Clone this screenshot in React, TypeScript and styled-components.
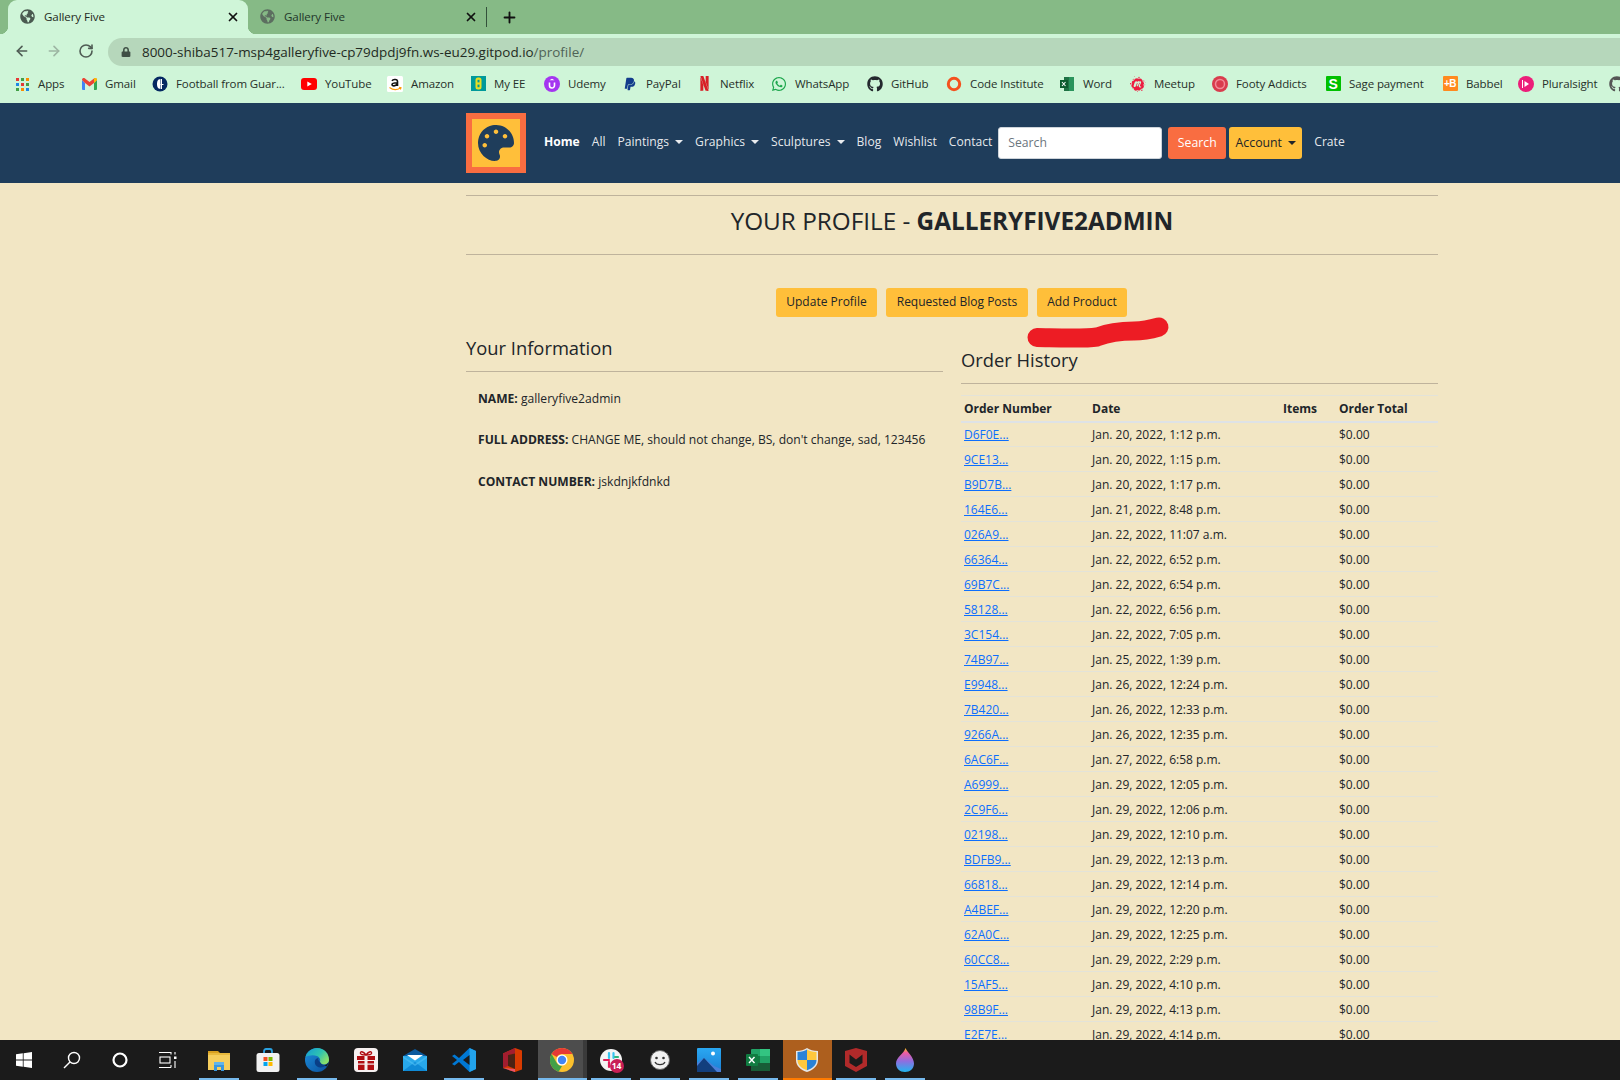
import React from "react";
import styled, { createGlobalStyle } from "styled-components";
import { ArrowLeft, ArrowRight, RotateCw, Plus, X } from "lucide-react";
import { FaPalette, FaGlobeAmericas, FaPaypal, FaWhatsapp, FaGithub, FaLock } from "react-icons/fa";
import { SiNetflix, SiMeetup } from "react-icons/si";

const Global = createGlobalStyle`
  html, body { margin: 0; padding: 0; height: 100%; overflow: hidden; background: #f2e6c4; }
  body { font-family: "Open Sans", "Noto Sans", sans-serif; color: #212529; }
  * { box-sizing: border-box; }
`;

const Page = styled.div`
  position: relative;
  width: 1620px;
  height: 1080px;
  display: flex;
  flex-direction: column;
  overflow: hidden;
`;

/* ---------- browser chrome ---------- */
const TabStrip = styled.div`
  height: 34px;
  flex: none;
  background: #86ba86;
  display: flex;
  align-items: stretch;
  padding-left: 8px;
`;
const Tab = styled.div<{ $active?: boolean }>`
  position: relative;
  width: 240px;
  display: flex;
  align-items: center;
  padding: 0 ${(p) => (p.$active ? 8 : 10)}px 0 12px;
  gap: 9px;
  border-radius: 9px 9px 0 0;
  background: ${(p) => (p.$active ? "#cff5d8" : "transparent")};
  color: ${(p) => (p.$active ? "#1f2a22" : "#22352a")};
  ${(p) =>
    p.$active
      ? `&::before { content: ""; position: absolute; left: -8px; bottom: 0; width: 8px; height: 8px;
           background: radial-gradient(circle at 0 0, transparent 8px, #cff5d8 8.5px); }
         &::after { content: ""; position: absolute; right: -8px; bottom: 0; width: 8px; height: 8px;
           background: radial-gradient(circle at 100% 0, transparent 8px, #cff5d8 8.5px); }`
      : ""}
`;
const TabGlobe = styled(FaGlobeAmericas)<{ $active?: boolean }>`
  width: 15px;
  height: 15px;
  flex: none;
  margin-bottom: 1px;
  color: ${(p) => (p.$active ? "#4a5a50" : "#5c6e60")};
`;
const TabTitle = styled.span`
  flex: 1;
  margin-bottom: 2px;
  font-size: 11.6px;
  letter-spacing: -0.1px;
  white-space: nowrap;
`;
const NewTabGroup = styled.div`
  display: flex;
  align-items: center;
  height: 100%;
`;
const TabDivider = styled.div`
  width: 1px;
  height: 20px;
  background: #33513a;
  margin-left: -2px;
  margin-right: 14px;
`;

const Toolbar = styled.div`
  height: 34px;
  flex: none;
  background: #cff5d8;
  display: flex;
  align-items: center;
  padding-left: 14px;
`;
const NavIcons = styled.div`
  display: flex;
  width: 94px;
  gap: 16px;
  flex: none;
  color: #4f5c54;
`;
const UrlBar = styled.div`
  flex: 1;
  height: 28px;
  margin-top: 1px;
  background: #b6d7bb;
  border-radius: 14px 0 0 14px;
  display: flex;
  align-items: center;
  padding-left: 13px;
  gap: 11px;
  font-size: 13.45px;
  color: #1f2a22;
  white-space: nowrap;
`;
const UrlPath = styled.span`
  color: #4f6356;
`;

const Bookmarks = styled.div`
  height: 35px;
  flex: none;
  background: #cff5d8;
  display: flex;
  align-items: center;
  padding: 0 0 4px 14px;
  overflow: hidden;
`;
const Bookmark = styled.div<{ $w: number }>`
  flex: 0 0 ${(p) => p.$w}px;
  display: flex;
  align-items: center;
  gap: 8px;
  font-size: 11.5px;
  letter-spacing: -0.1px;
  color: #263029;
  white-space: nowrap;
`;
const Fav = styled.span`
  width: 16px;
  height: 16px;
  flex: none;
  display: flex;
  align-items: center;
  justify-content: center;
`;
const FavText = styled.span<{ $bg: string; $c: string; $s?: number }>`
  width: 15px;
  height: 15px;
  display: flex;
  align-items: center;
  justify-content: center;
  border-radius: 1px;
  background: ${(p) => p.$bg};
  color: ${(p) => p.$c};
  font-size: ${(p) => p.$s ?? 12}px;
  font-weight: 700;
  letter-spacing: -0.5px;
  font-family: "Liberation Sans", sans-serif;
`;

/* ---------- site nav ---------- */
const SiteNav = styled.nav`
  height: 80px;
  flex: none;
  background: #1f3d5b;
  display: flex;
  align-items: center;
  padding-left: 466px;
`;
const Logo = styled.div`
  width: 60px;
  height: 60px;
  flex: none;
  background: #ffbf3a;
  border: 6px solid #f96d41;
  display: flex;
  align-items: center;
  justify-content: center;
  color: #1f3d5b;
  font-size: 36px;
  margin-right: 12px;
`;
const NavLinks = styled.div`
  display: flex;
  align-items: center;
  height: 32px;
  margin-top: -3px;
`;
const NavLink = styled.a<{ $bold?: boolean }>`
  padding: 0 6px;
  font-size: 12.1px;
  font-weight: ${(p) => (p.$bold ? 700 : 400)};
  color: ${(p) => (p.$bold ? "#fff" : "rgba(255,255,255,.9)")};
  display: flex;
  align-items: center;
  white-space: nowrap;
`;
const Caret = styled.span<{ $c?: string }>`
  display: inline-block;
  margin-left: 6px;
  border-top: 4px solid ${(p) => p.$c ?? "rgba(255,255,255,.9)"};
  border-left: 4px solid transparent;
  border-right: 4px solid transparent;
`;
const SearchInput = styled.input`
  width: 164px;
  height: 32px;
  margin-left: 0;
  padding: 0 9px;
  border: 1px solid #ced4da;
  border-radius: 3px;
  font: 12.2px "Open Sans", sans-serif;
  color: #495057;
  background: #fff;
  &::placeholder { color: #6c757d; opacity: 1; }
`;
const NavButton = styled.button<{ $bg: string; $c: string; $w: number; $ml: number }>`
  width: ${(p) => p.$w}px;
  height: 32px;
  margin-left: ${(p) => p.$ml}px;
  border: 0;
  border-radius: 3px;
  padding: 0;
  background: ${(p) => p.$bg};
  color: ${(p) => p.$c};
  font: 12.3px "Open Sans", sans-serif;
  display: flex;
  align-items: center;
  justify-content: center;
`;
const NavRight = styled.div`
  display: flex;
  align-items: center;
  margin-top: -1px;
`;
const CrateLink = styled(NavLink)`
  margin-left: 6px;
  margin-top: -3px;
`;

/* ---------- content ---------- */
const Main = styled.main`
  flex: 1;
  min-height: 0;
  overflow: hidden;
  background: #f2e6c4;
  padding-left: 466px;
`;
const Container = styled.div`
  position: relative;
  width: 972px;
`;
const Rule = styled.hr`
  margin: 0;
  border: 0;
  border-top: 1px solid #bfb39c;
`;
const TitleBlock = styled.div`
  padding-top: 12px;
`;
const Title = styled.h2`
  margin: 0;
  height: 58px;
  display: flex;
  align-items: center;
  justify-content: center;
  font-size: 24.3px;
  font-weight: 400;
  color: #212529;
  white-space: pre;
  padding-bottom: 9px;
  strong { font-weight: 700; }
`;
const ButtonRow = styled.div`
  display: flex;
  margin-top: 33px;
  padding-left: 310px;
  gap: 9px;
`;
const Amber = styled.button<{ $w: number }>`
  width: ${(p) => p.$w}px;
  height: 29px;
  padding: 0 0 2px;
  border: 0;
  border-radius: 3px;
  background: #ffbf3a;
  color: #212529;
  font: 12px "Open Sans", sans-serif;
`;
const Scribble = styled.svg`
  position: absolute;
  left: 556px;
  top: 130px;
  width: 150px;
  height: 40px;
`;
const Columns = styled.div`
  display: grid;
  grid-template-columns: 477px 477px;
  column-gap: 18px;
  margin-top: 17px;
`;
const Column = styled.section<{ $top?: number }>`
  padding-top: ${(p) => p.$top ?? 0}px;
  min-width: 0;
`;
const Heading = styled.h4`
  margin: 0;
  height: 38px;
  font-size: 18.35px;
  line-height: 28px;
  font-weight: 400;
  color: #212529;
  border-bottom: 1px solid #bfb39c;
`;
const Info = styled.div`
  padding: 5.500px 12px 0;
`;
const InfoLine = styled.p`
  margin: 0;
  height: 41.600px;
  display: flex;
  align-items: center;
  font-size: 12.1px;
  white-space: pre;
  strong { font-weight: 700; }
`;
const Table = styled.table`
  width: 477px;
  margin-top: 11px;
  border-collapse: collapse;
  table-layout: fixed;
  font-size: 12px;
  color: #212529;
  th, td { padding: 0 0 0 3px; text-align: left; white-space: nowrap; }
  th { height: 26px; font-weight: 700; border-top: 1px solid #e3e3d9; border-bottom: 2px solid #dee2e6; }
  td { height: 25px; border-bottom: 1px solid #e3e3d9; }
  a { color: #0d6efd; text-decoration: underline; }
`;

/* ---------- taskbar ---------- */
const Taskbar = styled.footer`
  height: 40px;
  flex: none;
  background: #1b1b1b;
  display: flex;
  align-items: stretch;
  position: relative;
`;
const SysSlot = styled.div`
  width: 48px;
  flex: none;
  display: flex;
  align-items: center;
  justify-content: center;
  color: #fff;
`;
const AppSlot = styled.div<{ $on?: boolean; $tone?: "active" | "alert" }>`
  position: relative;
  width: 49px;
  flex: none;
  display: flex;
  align-items: center;
  justify-content: center;
  background: ${(p) =>
    p.$tone === "active"
      ? "linear-gradient(90deg,#4d4d4d 0 45px,#3a3a3a 45px)"
      : p.$tone === "alert"
      ? "#ad5f1e"
      : "transparent"};
  ${(p) =>
    p.$on
      ? `&::after { content: ""; position: absolute; bottom: 0; height: 2px;
           left: ${p.$tone ? 0 : 4}px; right: ${p.$tone ? 0 : 5}px;
           background: ${p.$tone === "alert" ? "#ff7b00" : "#76b9ed"}; }`
      : ""}
`;
const AppsStart = styled.div`
  width: 2.500px;
  flex: none;
`;
const SlackBadge = styled.span`
  position: absolute;
  left: 23px;
  top: 19px;
  width: 14px;
  height: 14px;
  border-radius: 50%;
  background: #c81e56;
  color: #fff;
  font-size: 8.500px;
  font-weight: 700;
  line-height: 14px;
  text-align: center;
`;

/* ---------- drawn icons ---------- */
const AppsGrid = () => (
  <svg width="14" height="14" viewBox="0 0 14 14">
    {[0, 1, 2].flatMap((r) =>
      [0, 1, 2].map((c) => (
        <rect key={`${r}${c}`} x={c * 5 + 1} y={r * 5 + 1} width="3" height="3"
          fill={[["#e53935", "#43a047", "#fb8c00"], ["#1e88e5", "#e53935", "#43a047"], ["#43a047", "#fb8c00", "#1e88e5"]][r][c]} />
      ))
    )}
  </svg>
);
const Gmail = () => (
  <svg width="15" height="12" viewBox="0 0 15 12">
    <path d="M0 2v9a1 1 0 0 0 1 1h2V5z" fill="#4285f4" />
    <path d="M15 2v9a1 1 0 0 1-1 1h-2V5z" fill="#34a853" />
    <path d="M0 2l3 3 4.500 3.400L12 5l3-3c0-2-2-2.400-3-1.500L7.500 4 3 .5C2-.4 0 0 0 2z" fill="#ea4335" />
    <path d="M12 .5V5l3-3c0-2-2-2.400-3-1.500z" fill="#fbbc04" />
  </svg>
);
const Guardian = () => (
  <svg width="16" height="16" viewBox="0 0 16 16">
    <circle cx="8" cy="8" r="7.500" fill="#052962" />
    <path d="M8.500 3C5.500 3 5 6 5 8s.5 5 3.500 5z" fill="#fff" />
    <rect x="8.500" y="8" width="3" height="1" fill="#fff" />
    <rect x="9" y="3" width="1" height="10" fill="#fff" />
  </svg>
);
const YouTube = () => (
  <svg width="16" height="12" viewBox="0 0 16 12">
    <rect width="16" height="12" rx="3" fill="#f00" />
    <path d="M6.300 3.400v5.200L10.800 6z" fill="#fff" />
  </svg>
);
const Amazon = () => (
  <svg width="16" height="16" viewBox="0 0 16 16">
    <rect width="16" height="16" rx="1.500" fill="#fff" />
    <path d="M5 4.800C6 3 10.500 3 10.500 5.500V10M10.300 6.800C7 6.800 5 7.500 5 8.800s3.500 1.800 5.300-.8" fill="none" stroke="#111" strokeWidth="1.600" />
    <path d="M2.500 11.500c3.500 2.600 7.500 2.600 11 .5M12 11.300l2 .4-.6 1.800" fill="none" stroke="#f90" strokeWidth="1.100" />
  </svg>
);
const MyEE = () => (
  <svg width="15" height="15" viewBox="0 0 15 15">
    <rect width="15" height="15" fill="#009a9a" />
    <rect x="4.500" y="1.500" width="6" height="12" rx="2.500" fill="#e8de22" />
    <rect x="6.500" y="3.800" width="2" height="2.600" fill="#009a9a" />
    <rect x="6.500" y="8.600" width="2" height="2.600" fill="#009a9a" />
  </svg>
);
const Udemy = () => (
  <svg width="16" height="16" viewBox="0 0 16 16">
    <circle cx="8" cy="8" r="8" fill="#a435f0" />
    <path d="M5.500 6.500v3a2.500 2.500 0 0 0 5 0v-3" fill="none" stroke="#fff" strokeWidth="1.600" />
    <path d="M8 2.800l2.500 1.400H5.500z" fill="#fff" />
  </svg>
);
const Ring = () => (
  <svg width="16" height="16" viewBox="0 0 16 16">
    <circle cx="8" cy="8" r="5.700" fill="none" stroke="#f4511e" strokeWidth="3" />
  </svg>
);
const WordLike = () => (
  <svg width="16" height="16" viewBox="0 0 16 16">
    <path d="M5 1h10v14H5z" fill="#1f7244" />
    <rect x="10" y="1" width="5" height="14" fill="#2fa267" opacity=".7" />
    <rect x="1" y="4" width="8" height="8" fill="#0e5c2f" />
    <path d="M3 6l3.500 4M6.500 6L3 10" stroke="#fff" strokeWidth="1.100" />
  </svg>
);
const Footy = () => (
  <svg width="16" height="16" viewBox="0 0 16 16">
    <circle cx="8" cy="8" r="8" fill="#d93c4d" />
    <circle cx="8" cy="8" r="4.500" fill="none" stroke="#f28a96" strokeWidth="1.500" />
  </svg>
);
const Plural = () => (
  <svg width="16" height="16" viewBox="0 0 16 16">
    <circle cx="8" cy="8" r="8" fill="#ec1e79" />
    <path d="M6.500 5v6l4.500-3z" fill="#fff" />
    <path d="M4.500 4v8" stroke="#fff" strokeWidth="1" />
  </svg>
);

const WinLogo = () => (
  <svg width="16" height="16" viewBox="0 0 16 16" fill="#fff">
    <path d="M0 2.300L6.800 1.300V7.600H0zM7.600 1.200L16 0V7.600H7.600zM0 8.400H6.800V14.700L0 13.700zM7.600 8.400H16V16L7.600 14.800z" />
  </svg>
);
const SearchGlass = () => (
  <svg width="18" height="18" viewBox="0 0 18 18" fill="none" stroke="#fff" strokeWidth="1.400">
    <circle cx="11" cy="7" r="5.500" />
    <path d="M7 11l-6 6" />
  </svg>
);
const Cortana = () => (
  <svg width="18" height="18" viewBox="0 0 18 18" fill="none" stroke="#fff" strokeWidth="2.200">
    <circle cx="9" cy="9" r="6.500" />
  </svg>
);
const TaskView = () => (
  <svg width="18" height="16" viewBox="0 0 18 16" fill="none" stroke="#fff" strokeWidth="1.100">
    <path d="M0 .5h12M12 0v2.500M0 15.500h12M12 13v2.500" />
    <rect x="1" y="5" width="10" height="6" />
    <rect x="15" y="4.500" width="2.500" height="2.500" fill="#fff" stroke="none" />
    <path d="M16 9v7M16 0v2.500" />
  </svg>
);
const Explorer = () => (
  <svg width="24" height="24" viewBox="0 0 24 24">
    <path d="M1 3h10l2 2H1z" fill="#d9a020" />
    <rect x="1" y="5" width="22" height="17" fill="#f6ce5d" />
    <rect x="1" y="5" width="22" height="2" fill="#e9b93c" />
    <path d="M7 23v-7h10v7h-3v-4h-4v4z" fill="#3a96dd" />
    <rect x="7" y="14" width="10" height="3" fill="#62b4ea" />
  </svg>
);
const Store = () => (
  <svg width="24" height="24" viewBox="0 0 24 24">
    <path d="M8 7V3.500C8 2 9 1 10 1h4c1 0 2 1 2 2.500V7" fill="none" stroke="#2aa1e0" strokeWidth="1.800" />
    <rect x="0.500" y="5" width="23" height="19" rx="2.500" fill="#f1f1f1" />
    <rect x="7.500" y="9" width="4" height="4" fill="#f25022" />
    <rect x="12.500" y="9" width="4" height="4" fill="#7fba00" />
    <rect x="7.500" y="14" width="4" height="4" fill="#00a4ef" />
    <rect x="12.500" y="14" width="4" height="4" fill="#ffb900" />
  </svg>
);
const Edge = () => (
  <svg width="24" height="24" viewBox="0 0 24 24">
    <defs>
      <linearGradient id="edgeTop" x1="0" y1="0" x2="1" y2="0.600">
        <stop offset="0" stopColor="#149ad6" />
        <stop offset=".6" stopColor="#2fc3b0" />
        <stop offset="1" stopColor="#8ae06a" />
      </linearGradient>
      <linearGradient id="edgeLow" x1="0" y1="0" x2="1" y2="1">
        <stop offset="0" stopColor="#1c8fdc" />
        <stop offset="1" stopColor="#0b4f9c" />
      </linearGradient>
    </defs>
    <circle cx="12" cy="12" r="12" fill="url(#edgeLow)" />
    <path d="M.5 9C2 3.500 7 0 12 0c7 0 12 5 12 12 0 3-3 5-6 4.500-2.500-.4-3.500-1.500-3-2.800.8-2-.4-4.700-3-5.700C8 6.500 3 7.500.5 9z" fill="url(#edgeTop)" />
    <path d="M15.500 14.500c1 2 3.500 2.800 6 2-1.500 2.200-4 3.200-6.500 3-3.500-.3-6-3.500-5-7 .5-1.500 2-2.500 3.500-2.500-1 1.500.5 3 2 4.500z" fill="#0a3f86" />
    <path d="M19.500 17.500a6 6 0 0 0 4-3.500c-.2 1.500-1 3.300-2 4.500z" fill="#1b1b1b" />
  </svg>
);
const Gift = () => (
  <svg width="24" height="24" viewBox="0 0 24 24">
    <rect width="24" height="24" rx="4" fill="#f6f0f0" />
    <path d="M12 7C9 3 6 3 6.500 5.500 7 7 10 7 12 7c2 0 5 0 5.500-1.500C18 3 15 3 12 7z" fill="none" stroke="#b00d12" strokeWidth="1.400" />
    <rect x="3" y="8" width="18" height="4" fill="#b00d12" />
    <rect x="4" y="13" width="16" height="9" fill="#b00d12" />
    <rect x="10.500" y="8" width="3" height="14" fill="#f6f0f0" />
    <rect x="4" y="15.500" width="16" height="1.200" fill="#f6f0f0" />
  </svg>
);
const Mail = () => (
  <svg width="24" height="24" viewBox="0 0 24 24">
    <path d="M0 8L12 1l12 7v3H0z" fill="#0b5a9e" />
    <path d="M0 8h24v15H0z" fill="#28a8ea" />
    <path d="M4 7h16l-8 5.500z" fill="#fff" />
    <path d="M0 23L12 14l12 9z" fill="#0f8ad6" />
    <path d="M0 8l12 8L24 8v2L12 18 0 10z" fill="#50c0f5" opacity=".6" />
  </svg>
);
const VSCode = () => (
  <svg width="24" height="24" viewBox="0 0 24 24">
    <path d="M17.500 0L24 3v18l-6.500 3L7 14l-4.500 3.500L0 16l5-4-5-4 2.500-1.500L7 10z" fill="#0078d4" />
    <path d="M17.500 0L24 3v18l-6.500 3z" fill="#22a3ec" />
    <path d="M17.500 7v10L11 12z" fill="#1b1b1b" />
  </svg>
);
const Office = () => (
  <svg width="20" height="24" viewBox="0 0 20 24">
    <path d="M12 0l7 2.500v19L12 24 0 20V5.500z" fill="#d83b01" />
    <path d="M12 0L0 5.500V20l5-2V7l7-1.500z" fill="#a31d2f" />
    <path d="M12 24L0 20l12 1z" fill="#e8546a" />
    <path d="M5 7l7-1.500V21l-7-3z" fill="#1b1b1b" opacity=".75" />
  </svg>
);
const Chrome = () => (
  <svg width="24" height="24" viewBox="0 0 24 24">
    <circle cx="12" cy="12" r="12" fill="#fbc02d" />
    <path d="M12 0a12 12 0 0 1 10.400 6H12a6 6 0 0 0-5.200 3L1.600 6A12 12 0 0 1 12 0z" fill="#e53935" />
    <path d="M1.600 6l5.200 9a6 6 0 0 0 5.200 3l-3.400 5.700A12 12 0 0 1 1.600 6z" fill="#43a047" />
    <circle cx="12" cy="12" r="5.500" fill="#fff" />
    <circle cx="12" cy="12" r="4.200" fill="#4285f4" />
  </svg>
);
const Slack = () => (
  <svg width="22" height="22" viewBox="0 0 22 22">
    <circle cx="11" cy="11" r="11" fill="#f4f4f4" />
    <path d="M9 4v5M13.500 4v5" stroke="#36c5f0" strokeWidth="2.200" strokeLinecap="round" />
    <path d="M15 8h3" stroke="#2eb67d" strokeWidth="2.200" strokeLinecap="round" />
    <path d="M4 11h5" stroke="#e01e5a" strokeWidth="2.200" strokeLinecap="round" />
    <path d="M9 13v5" stroke="#e01e5a" strokeWidth="2.200" strokeLinecap="round" />
  </svg>
);
const Smile = () => (
  <svg width="22" height="22" viewBox="0 0 22 22">
    <circle cx="11" cy="11" r="9.500" fill="#f1f1f1" stroke="#666" strokeWidth="1" />
    <circle cx="7.500" cy="9" r="1.300" fill="#333" />
    <circle cx="14.500" cy="9" r="1.300" fill="#333" />
    <path d="M6 13c1.500 3.500 8.500 3.500 10 0" fill="none" stroke="#333" strokeWidth="1.200" />
  </svg>
);
const Photos = () => (
  <svg width="24" height="24" viewBox="0 0 24 24">
    <defs>
      <linearGradient id="sky" x1="0" y1="0" x2="0" y2="1">
        <stop offset="0" stopColor="#2aa8f2" />
        <stop offset="1" stopColor="#1b7fd4" />
      </linearGradient>
    </defs>
    <rect width="24" height="24" rx="1" fill="url(#sky)" />
    <circle cx="16" cy="5.500" r="2" fill="#fff" />
    <path d="M0 15l7-5 10 8 7 3v3H0z" fill="#4a7fd8" />
    <path d="M0 18l7-8 13 14H0z" fill="#123f7e" />
  </svg>
);
const Excel = () => (
  <svg width="24" height="24" viewBox="0 0 24 24">
    <rect x="5" y="1" width="19" height="22" rx="1" fill="#21a366" />
    <rect x="14" y="1" width="10" height="7" fill="#33c481" />
    <rect x="5" y="8" width="9" height="7" fill="#107c41" />
    <rect x="5" y="15" width="19" height="8" fill="#185c37" />
    <rect y="6" width="12" height="12" rx="1" fill="#107c41" />
    <path d="M3 9l5.500 6M8.500 9L3 15" stroke="#fff" strokeWidth="1.400" />
  </svg>
);
const Shield = () => (
  <svg width="22" height="24" viewBox="0 0 22 24">
    <path d="M11 0c3 2 6 3 11 3v9c0 6-5 10-11 12C5 22 0 18 0 12V3c5 0 8-1 11-3z" fill="#e7e7e7" />
    <path d="M11 1.500V12H1.500V4C6 4 8.500 3 11 1.500z" fill="#2a82d6" />
    <path d="M11 1.500C13.500 3 16 4 20.500 4v8H11z" fill="#ffc83d" />
    <path d="M1.500 12H11v10.300C6 20.500 1.500 17.500 1.500 12z" fill="#ffc83d" />
    <path d="M11 12h9.500c0 5.500-4.500 8.500-9.500 10.300z" fill="#2a82d6" />
  </svg>
);
const McAfee = () => (
  <svg width="22" height="24" viewBox="0 0 22 24">
    <path d="M0 3l11-3 11 3-0 15-11 6L0 18z" fill="#b12a2a" />
    <path d="M4.500 6.500L11 11.500l6.500-5V15L11 19 4.500 15z" fill="#1b1b1b" />
  </svg>
);
const Drop = () => (
  <svg width="18" height="24" viewBox="0 0 18 24">
    <defs>
      <linearGradient id="dropG" x1="0" y1="0" x2="0" y2="1">
        <stop offset="0" stopColor="#f5c518" />
        <stop offset=".2" stopColor="#ef5ba1" />
        <stop offset=".55" stopColor="#8f6ee0" />
        <stop offset="1" stopColor="#1fb6f0" />
      </linearGradient>
    </defs>
    <path d="M9.500 0C11 4 18 9 18 15.500 18 20.500 14 24 9 24s-9-3.500-9-8.500C0 9 8 6 9.500 0z" fill="url(#dropG)" />
  </svg>
);

/* ---------- data ---------- */
const bookmarks: { w: number; label: string; icon: React.ReactNode }[] = [
  { w: 67, label: "Apps", icon: <AppsGrid /> },
  { w: 71, label: "Gmail", icon: <Gmail /> },
  { w: 149, label: "Football from Guar...", icon: <Guardian /> },
  { w: 86, label: "YouTube", icon: <YouTube /> },
  { w: 83, label: "Amazon", icon: <Amazon /> },
  { w: 74, label: "My EE", icon: <MyEE /> },
  { w: 78, label: "Udemy", icon: <Udemy /> },
  { w: 74, label: "PayPal", icon: <FaPaypal size={14} color="#123c8c" /> },
  { w: 75, label: "Netflix", icon: <SiNetflix size={15} color="#d81f26" /> },
  { w: 96, label: "WhatsApp", icon: <FaWhatsapp size={16} color="#1ca64c" /> },
  { w: 79, label: "GitHub", icon: <FaGithub size={16} color="#24292e" /> },
  { w: 113, label: "Code Institute", icon: <Ring /> },
  { w: 71, label: "Word", icon: <WordLike /> },
  { w: 82, label: "Meetup", icon: <SiMeetup size={16} color="#ed1c40" /> },
  { w: 113, label: "Footy Addicts", icon: <Footy /> },
  { w: 117, label: "Sage payment", icon: <FavText $bg="#00c000" $c="#fff" $s={14}>S</FavText> },
  { w: 76, label: "Babbel", icon: <FavText $bg="#ff8a1f" $c="#fff" $s={10}>+B</FavText> },
  { w: 91, label: "Pluralsight", icon: <Plural /> },
  { w: 20, label: "", icon: <FaGithub size={16} color="#555" /> },
];

const orders: [string, string][] = [
  ["D6F0E...", "Jan. 20, 2022, 1:12 p.m."],
  ["9CE13...", "Jan. 20, 2022, 1:15 p.m."],
  ["B9D7B...", "Jan. 20, 2022, 1:17 p.m."],
  ["164E6...", "Jan. 21, 2022, 8:48 p.m."],
  ["026A9...", "Jan. 22, 2022, 11:07 a.m."],
  ["66364...", "Jan. 22, 2022, 6:52 p.m."],
  ["69B7C...", "Jan. 22, 2022, 6:54 p.m."],
  ["58128...", "Jan. 22, 2022, 6:56 p.m."],
  ["3C154...", "Jan. 22, 2022, 7:05 p.m."],
  ["74B97...", "Jan. 25, 2022, 1:39 p.m."],
  ["E9948...", "Jan. 26, 2022, 12:24 p.m."],
  ["7B420...", "Jan. 26, 2022, 12:33 p.m."],
  ["9266A...", "Jan. 26, 2022, 12:35 p.m."],
  ["6AC6F...", "Jan. 27, 2022, 6:58 p.m."],
  ["A6999...", "Jan. 29, 2022, 12:05 p.m."],
  ["2C9F6...", "Jan. 29, 2022, 12:06 p.m."],
  ["02198...", "Jan. 29, 2022, 12:10 p.m."],
  ["BDFB9...", "Jan. 29, 2022, 12:13 p.m."],
  ["66818...", "Jan. 29, 2022, 12:14 p.m."],
  ["A4BEF...", "Jan. 29, 2022, 12:20 p.m."],
  ["62A0C...", "Jan. 29, 2022, 12:25 p.m."],
  ["60CC8...", "Jan. 29, 2022, 2:29 p.m."],
  ["15AF5...", "Jan. 29, 2022, 4:10 p.m."],
  ["98B9F...", "Jan. 29, 2022, 4:13 p.m."],
  ["E2E7E...", "Jan. 29, 2022, 4:14 p.m."],
];

const apps: { key: string; icon: React.ReactNode; on?: boolean; tone?: "active" | "alert"; badge?: boolean }[] = [
  { key: "explorer", icon: <Explorer />, on: true },
  { key: "store", icon: <Store /> },
  { key: "edge", icon: <Edge />, on: true },
  { key: "gift", icon: <Gift /> },
  { key: "mail", icon: <Mail /> },
  { key: "vscode", icon: <VSCode />, on: true },
  { key: "office", icon: <Office /> },
  { key: "chrome", icon: <Chrome />, on: true, tone: "active" },
  { key: "slack", icon: <Slack />, on: true, badge: true },
  { key: "smile", icon: <Smile />, on: true },
  { key: "photos", icon: <Photos />, on: true },
  { key: "excel", icon: <Excel />, on: true },
  { key: "shield", icon: <Shield />, on: true, tone: "alert" },
  { key: "mcafee", icon: <McAfee />, on: true },
  { key: "drop", icon: <Drop />, on: true },
];

export default function App() {
  return (
    <Page>
      <Global />
      <TabStrip>
        <Tab $active>
          <TabGlobe $active />
          <TabTitle>Gallery Five</TabTitle>
          <X size={14} strokeWidth={3} color="#111" />
        </Tab>
        <Tab>
          <TabGlobe />
          <TabTitle>Gallery Five</TabTitle>
          <X size={14} strokeWidth={3} color="#111" />
        </Tab>
        <NewTabGroup>
          <TabDivider />
          <Plus size={17} strokeWidth={2.6} color="#111" />
        </NewTabGroup>
      </TabStrip>
      <Toolbar>
        <NavIcons>
          <ArrowLeft size={16} strokeWidth={2.4} />
          <ArrowRight size={16} strokeWidth={2.4} color="#9db5a3" />
          <RotateCw size={16} strokeWidth={2.4} />
        </NavIcons>
        <UrlBar>
          <FaLock size={10} color="#3f4f45" />
          <span>
            8000-shiba517-msp4galleryfive-cp79dpdj9fn.ws-eu29.gitpod.io<UrlPath>/profile/</UrlPath>
          </span>
        </UrlBar>
      </Toolbar>
      <Bookmarks>
        {bookmarks.map((b, i) => (
          <Bookmark key={i} $w={b.w}>
            <Fav>{b.icon}</Fav>
            {b.label}
          </Bookmark>
        ))}
      </Bookmarks>

      <SiteNav>
        <Logo>
          <FaPalette />
        </Logo>
        <NavLinks>
          <NavLink $bold>Home</NavLink>
          <NavLink>All</NavLink>
          <NavLink>Paintings<Caret /></NavLink>
          <NavLink>Graphics<Caret /></NavLink>
          <NavLink>Sculptures<Caret /></NavLink>
          <NavLink>Blog</NavLink>
          <NavLink>Wishlist</NavLink>
          <NavLink>Contact</NavLink>
        </NavLinks>
        <NavRight>
          <SearchInput placeholder="Search" readOnly />
          <NavButton $bg="#f96d41" $c="#fff" $w={58} $ml={6}>Search</NavButton>
          <NavButton $bg="#ffbf3a" $c="#212529" $w={73} $ml={3}>Account<Caret $c="#212529" /></NavButton>
        </NavRight>
        <CrateLink>Crate</CrateLink>
      </SiteNav>

      <Main>
        <Container>
          <TitleBlock>
            <Rule />
            <Title>YOUR PROFILE - <strong>GALLERYFIVE2ADMIN</strong></Title>
            <Rule />
          </TitleBlock>
          <ButtonRow>
            <Amber $w={101}>Update Profile</Amber>
            <Amber $w={142}>Requested Blog Posts</Amber>
            <Amber $w={90}>Add Product</Amber>
          </ButtonRow>
          <Scribble viewBox="0 0 150 40">
            <path d="M15 24.500C40 25 62 26 75 24 88 19 100 18 112 18c10 0 18-2 25-4" fill="none" stroke="#ed1c24" strokeWidth="19" strokeLinecap="round" />
          </Scribble>
          <Columns>
            <Column>
              <Heading>Your Information</Heading>
              <Info>
                <InfoLine><strong>NAME:</strong> galleryfive2admin</InfoLine>
                <InfoLine><strong>FULL ADDRESS:</strong> CHANGE ME, should not change, BS, don't change, sad, 123456</InfoLine>
                <InfoLine><strong>CONTACT NUMBER:</strong> jskdnjkfdnkd</InfoLine>
              </Info>
            </Column>
            <Column $top={12}>
              <Heading>Order History</Heading>
              <Table>
                <colgroup>
                  <col width="128" />
                  <col width="191" />
                  <col width="56" />
                  <col width="102" />
                </colgroup>
                <thead>
                  <tr>
                    <th>Order Number</th>
                    <th>Date</th>
                    <th>Items</th>
                    <th>Order Total</th>
                  </tr>
                </thead>
                <tbody>
                  {orders.map(([id, date]) => (
                    <tr key={id}>
                      <td><a href="#">{id}</a></td>
                      <td>{date}</td>
                      <td></td>
                      <td>$0.00</td>
                    </tr>
                  ))}
                </tbody>
              </Table>
            </Column>
          </Columns>
        </Container>
      </Main>

      <Taskbar>
        <SysSlot><WinLogo /></SysSlot>
        <SysSlot><SearchGlass /></SysSlot>
        <SysSlot><Cortana /></SysSlot>
        <SysSlot><TaskView /></SysSlot>
        <AppsStart />
        {apps.map((a) => (
          <AppSlot key={a.key} $on={a.on} $tone={a.tone}>
            {a.icon}
            {a.badge && <SlackBadge>14</SlackBadge>}
          </AppSlot>
        ))}
      </Taskbar>
    </Page>
  );
}
